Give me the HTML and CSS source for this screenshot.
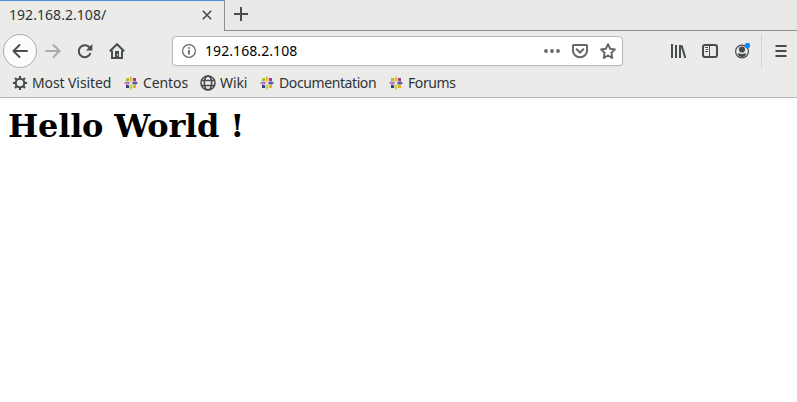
FILE: index.html
```html
<!DOCTYPE html>
<html lang="en">
<head>
<meta charset="utf-8">
<title>192.168.2.108/</title>
<link rel="stylesheet" href="styles.css">
</head>
<body>
<svg class="defs" width="0" height="0" aria-hidden="true">
  <symbol id="centos" viewBox="0 0 14 14">
    <path fill="#f3b54a" d="M7 0l1.500 2v3L7 6 5.500 5V2z"/>
    <path fill="#b4d95a" d="M7 14l-1.500-2V9L7 8l1.500 1v3z"/>
    <path fill="#b978b0" d="M0 7l2-1.500h3L6 7 5 8.500H2z"/>
    <path fill="#5b5a9c" d="M14 7l-2 1.500H9L8 7l1-1.500h3z"/>
    <path fill="#9ccd2a" d="M2 2h3v2.300L4.300 5H2z"/>
    <path fill="#a03a8c" d="M12 2H9v2.300l.7.7H12z"/>
    <path fill="#3a3988" d="M2 12h3V9.700L4.300 9H2z"/>
    <path fill="#f3a81f" d="M12 12H9V9.700l.7-.7H12z"/>
    <circle fill="#ebebe9" cx="7" cy="7" r="1.200"/>
  </symbol>
</svg>
<header class="chrome">
  <div class="tabs">
    <div class="tab"><span>192.168.2.108/</span>
      <svg width="10" height="10" viewBox="0 0 10 10"><path d="M.8.8l8.4 8.4M9.2.8L.8 9.2"/></svg>
    </div>
    <div class="strip"><svg width="14" height="14" viewBox="0 0 14 14"><path d="M7 0v14M0 7h14"/></svg></div>
  </div>
  <nav class="toolbar">
    <div class="back"><svg width="16" height="16" viewBox="0 0 16 16"><path d="M15 8H1.5M7.5 2l-6 6 6 6"/></svg></div>
    <svg class="forward" width="16" height="16" viewBox="0 0 16 16"><path d="M1 8h13.5M8.5 2l6 6-6 6"/></svg>
    <svg class="reload" width="16" height="16" viewBox="0 0 16 16"><path d="M12.7 4.7A6 6 0 1 0 13.5 10"/><path class="solid" d="M15.3 1v6.5H9z"/></svg>
    <svg class="home" width="16" height="16" viewBox="0 0 16 16"><path d="M.8 8.3L8 1.2l7.2 7.1M3 7.5V15h10V7.5"/><path class="solid" d="M6 8h4v7H6z"/><path class="hole" d="M8.500 11v1.500"/></svg>
    <div class="address">
      <svg class="info" width="14" height="14" viewBox="0 0 14 14"><circle cx="7" cy="7" r="6.4"/><path class="stem" d="M7 6v4.5M7 3.2v1.6"/></svg>
      <span>192.168.2.108</span>
      <svg class="dots" width="16" height="16" viewBox="0 0 16 16"><circle cx="2" cy="8" r="1.9"/><circle cx="8" cy="8" r="1.9"/><circle cx="14" cy="8" r="1.9"/></svg>
      <svg class="pocket" width="16" height="16" viewBox="0 0 16 16"><path d="M1.9 2h12.2q1 0 1 1v4.2a7.1 7.1 0 0 1-14.2 0V3q0-1 1-1z"/><path d="M4.7 6.3L8 9.5l3.3-3.2" stroke-linecap="round"/></svg>
      <svg class="star" width="16" height="16" viewBox="0 0 16 16"><path d="M8 1.2l2.1 4.5 4.8.7-3.5 3.5.8 5L8 12.5l-4.2 2.4.8-5L1.1 6.4l4.8-.7z"/></svg>
    </div>
    <svg class="library" width="16" height="16" viewBox="0 0 16 16"><path d="M2 1v14M6 2v13M10 2v13M11.5 2.3L15.3 15"/></svg>
    <svg class="sidebar" width="16" height="16" viewBox="0 0 16 16"><rect x="1" y="2" width="14" height="12" rx="2"/><path class="thin" d="M7.5 2v12M3 4.5h3M4 6.5h2M3 8.5h3"/></svg>
    <svg class="account" width="16" height="16" viewBox="0 0 16 16"><circle class="ring" cx="8" cy="8.5" r="6.4"/><circle class="face" cx="8" cy="6.5" r="3.1"/><path class="face" d="M3.500 10.5H6q2 1.200 4 0h2.500q-1 3.400-4.500 3.400t-4.500-3.400z"/><circle class="badge" cx="13.400" cy="2.5" r="2.7"/></svg>
    <div class="menu"><svg width="12" height="12" viewBox="0 0 12 12"><path d="M.5 1h11M.5 6h11M.5 11h11"/></svg></div>
  </nav>
  <nav class="bookmarks">
    <a class="visited"><svg width="16" height="16" viewBox="0 0 16 16"><circle cx="8" cy="8" r="4.300"/><path d="M8 1v3M8 12v3M1 8h3M12 8h3M3 3l2.2 2.2M10.8 10.8L13 13M3 13l2.2-2.2M10.8 5.2L13 3"/></svg><span>Most Visited</span></a>
    <a><svg width="14" height="14"><use href="#centos"/></svg><span>Centos</span></a>
    <a class="wiki"><svg width="16" height="16" viewBox="0 0 16 16"><circle cx="8" cy="8" r="7"/><ellipse cx="8" cy="8" rx="3.7" ry="7"/><path d="M1.7 5.5h12.6M1.7 10.5h12.6"/></svg><span>Wiki</span></a>
    <a><svg width="14" height="14"><use href="#centos"/></svg><span class="long">Documentation</span></a>
    <a><svg width="14" height="14"><use href="#centos"/></svg><span class="long">Forums</span></a>
  </nav>
</header>
<main><h1>Hello World !</h1></main>
</body>
</html>
```

FILE: styles.css
```css
* { box-sizing: border-box; }
body { margin: 0; background: #fff; font: 14px/20px "Noto Sans", sans-serif; color: #2e3436; overflow: hidden; }
svg { display: block; flex: none; fill: none; stroke: #474d4f; stroke-width: 2; }
.defs { position: absolute; }
.chrome { height: 98px; background: #ebebe9; border-bottom: 1px solid #b6b6b3; }
.tabs { display: flex; height: 31px; }
.tab { display: flex; align-items: center; justify-content: space-between; width: 224px; padding: 0 12px 1px 9px; border-top: 1px solid #4a90d9; }
.tab span { padding-bottom: 2px; letter-spacing: .05px; }
.tab svg { stroke-width: 1.6; margin-top: -1px; }
.strip { flex: 1; padding: 7px 0 0 9px; border-left: 1px solid #8f8f8e; border-bottom: 1px solid #8f8f8e; background: #e8e8e7; }
.toolbar { display: flex; align-items: center; height: 40px; padding-left: 3px; }
.back { display: grid; place-items: center; width: 34px; height: 34px; border: 1px solid #adadab; border-radius: 50%; background: #fcfcfc; }
.back svg, .forward { stroke-linecap: round; stroke-linejoin: round; }
.forward { margin-left: 8px; stroke: #a9acab; }
.reload { margin-left: 16px; }
.home { margin-left: 16px; }
.solid { fill: #474d4f; stroke: none; }
.hole { stroke: #ebebe9; stroke-width: 1; }
.address { display: flex; align-items: center; width: 451px; height: 30px; margin-left: 47px; padding: 0 6px 0 9px; background: #fff; border: 1px solid #b9b9b5; border-radius: 4px; box-shadow: 0 1px 2px #0000000d; color: #000; }
.address span { margin-left: 9px; flex: 1; letter-spacing: .08px; }
.address svg { stroke: #666; }
.address .info { stroke-width: 1.2; }
.stem { stroke-width: 1.8; }
.address .dots { fill: #666; stroke: none; }
.pocket, .star { margin-left: 12px; }
.star { stroke-linejoin: round; }
.library { margin-left: 47px; }
.sidebar { margin-left: 16px; }
.thin { stroke-width: 1; }
.account { margin-left: 16px; }
.ring { stroke-width: 1.2; }
.face { fill: #474d4f; stroke: none; }
.badge { fill: #0a84ff; stroke: none; }
.menu { display: flex; align-items: center; height: 34px; margin-left: 11px; padding-left: 13px; border-left: 1px solid #d2d2d0; }
.bookmarks { display: grid; grid-template-columns: 112px 76px 60px 129px 80px; height: 24px; padding-left: 12px; align-items: center; letter-spacing: -.1px; }
.bookmarks a { display: flex; align-items: center; gap: 5px; }
.bookmarks .long { letter-spacing: -.4px; }
.bookmarks a svg { stroke: none; }
.bookmarks .visited { gap: 4px; }
.bookmarks .visited svg { stroke: #474d4f; stroke-width: 2.1; }
.bookmarks .wiki { gap: 4px; }
.bookmarks .wiki svg { stroke: #474d4f; stroke-width: 1.6; }
h1 { margin: 10px 8px; font: bold 32px/37px "DejaVu Serif", serif; letter-spacing: -.2px; color: #000; }
```
